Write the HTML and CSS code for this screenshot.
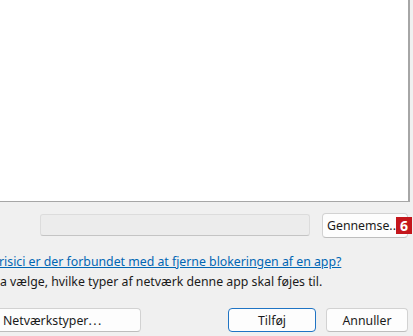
FILE: index.html
```html
<!DOCTYPE html>
<html lang="da">
<head>
  <meta charset="UTF-8">
  <title>Tillad en app</title>
  <link rel="stylesheet" href="styles.css">
</head>
<body>
  <div class="dialog">
    <div class="app-list"></div>

    <div class="browse-row">
      <div class="path-field"></div>
      <div class="browse-wrap">
        <button type="button" class="btn btn-browse">Gennemse..</button>
        <span class="badge">6</span>
      </div>
    </div>

    <a href="#" class="risk-link">risici er der forbundet med at fjerne blokeringen af en app?</a>
    <p class="hint">a vælge, hvilke typer af netværk denne app skal føjes til.</p>

    <div class="actions">
      <button type="button" class="btn btn-types">Netværkstyper<span class="dots">...</span></button>
      <div class="actions-right">
        <button type="button" class="btn btn-default">Tilføj</button>
        <button type="button" class="btn">Annuller</button>
      </div>
    </div>
  </div>
</body>
</html>
```

FILE: styles.css
```css
body {
  margin: 0;
  padding: 0;
  background-color: #f0f0f0;
  font-family: "Noto Sans", "Open Sans", sans-serif;
  font-size: 12.3px;
  color: #1a1a1a;
  overflow: hidden;
}
.dialog {
  width: 413px;
  height: 336px;
}
.app-list {
  width: 408px;
  height: 201px;
  background: #fff;
  border-right: 2px solid #a6a6a6;
  border-bottom: 1px solid #a6a6a6;
}
.browse-row {
  display: flex;
  align-items: flex-start;
  margin-top: 11px;
  height: 25px;
}
.path-field {
  margin-left: 40px;
  width: 268px;
  height: 20px;
  margin-top: 1px;
  background: #ececec;
  border: 1px solid #dcdcdc;
  border-bottom-color: #c4c4c4;
  border-radius: 3px;
}
.browse-wrap {
  position: relative;
  margin-left: 12px;
}
.btn {
  font-family: inherit;
  font-size: 12.3px;
  color: #1a1a1a;
  background: #fdfdfd;
  border: 1px solid #d2d2d2;
  border-bottom-color: #bdbdbd;
  border-radius: 4px;
  height: 24px;
  padding: 0 6px;
  cursor: pointer;
}
.btn-browse {
  width: 86px;
  height: 25px;
  text-align: left;
  padding-left: 4px;
}
.badge {
  position: absolute;
  right: -4px;
  top: 4px;
  width: 16px;
  height: 17px;
  background: #c4161c;
  color: #fff;
  font-weight: bold;
  font-size: 14px;
  line-height: 17px;
  text-align: center;
}
.risk-link {
  display: block;
  margin: 15px 0 0 -1px;
  line-height: 18px;
  color: #0066b4;
  text-decoration: underline;
  white-space: nowrap;
}
.hint {
  margin: 2px 0 0 0;
  line-height: 18px;
  white-space: nowrap;
}
.actions {
  display: flex;
  justify-content: space-between;
  margin-top: 17px;
  width: 408px;
}
.btn-types {
  margin-left: -20px;
  width: 161px;
  text-align: left;
  padding-left: 22px;
}
.dots {
  letter-spacing: 1.5px;
}
.actions-right {
  display: flex;
  gap: 10px;
}
.btn-default {
  width: 88px;
  border: 1px solid #1f74c4;
}
.actions-right .btn:last-child {
  width: 82px;
}
```
